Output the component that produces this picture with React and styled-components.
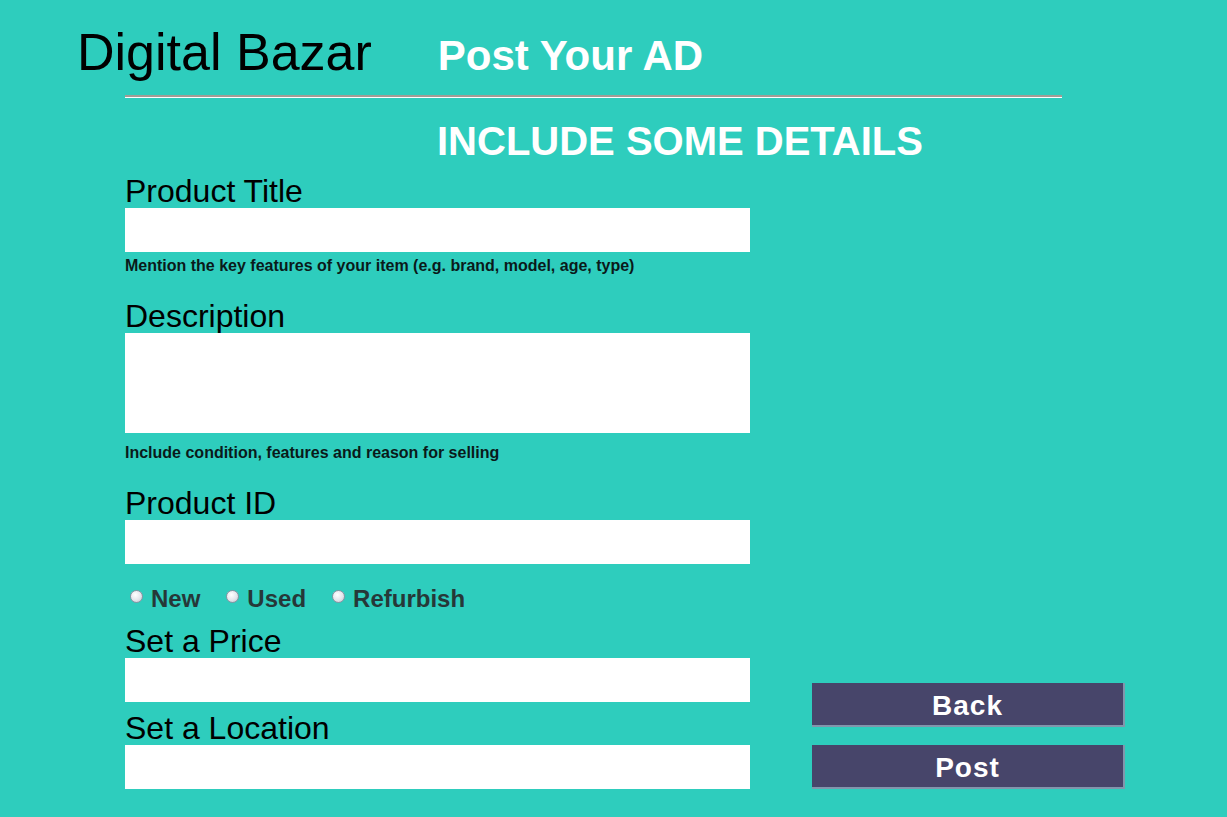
import React from 'react'
import styled, { createGlobalStyle } from 'styled-components';

const GlobalStyle = createGlobalStyle`
    html, body {
        margin: 0;
        background-color: #2ecdbd;
    }
    body {
        font-family: "Liberation Sans", Arial, sans-serif;
    }
`;

const Page = styled.div`
    width: 1227px;
    height: 817px;
    overflow: hidden;
    padding-top: 22px;
    box-sizing: border-box;
`;

const Header = styled.header`
    display: flex;
    align-items: baseline;
    padding-left: 77px;
    height: 60px;
`;

const Brand = styled.h1`
    margin: 0;
    font-size: 52px;
    font-weight: 400;
    line-height: 60px;
    color: #000;
`;

const PageTitle = styled.h2`
    margin: 0 0 0 66px;
    font-size: 42px;
    font-weight: 700;
    color: #fff;
`;

const Divider = styled.hr`
    margin: 13px 0 0 125px;
    width: 937px;
    height: 0;
    border: 0;
    border-top: 2px solid #a39c95;
    border-bottom: 1px solid #fff;
`;

const Heading = styled.h3`
    margin: 18px 0 0 437px;
    font-size: 40px;
    line-height: 50px;
    font-weight: 700;
    color: #fff;
`;

const Main = styled.main`
    display: grid;
    grid-template-columns: 625px 313px;
    column-gap: 62px;
    align-items: end;
    padding-left: 125px;
    margin-top: 8px;
`;

const Form = styled.form`
    display: flex;
    flex-direction: column;
`;

const Label = styled.label`
    display: block;
    margin-top: ${p => p.gap || 0}px;
    font-size: 32px;
    line-height: 34px;
    height: 34px;
    color: #000;
`;

const Input = styled.input`
    display: block;
    width: 625px;
    height: 44px;
    box-sizing: border-box;
    border: 0;
    background: #fff;
    outline: none;
`;

const TextArea = styled.textarea`
    display: block;
    width: 625px;
    height: 100px;
    box-sizing: border-box;
    border: 0;
    background: #fff;
    resize: none;
    outline: none;
`;

const Hint = styled.p`
    margin: ${p => p.gap || 0}px 0 0 0;
    font-size: 16px;
    line-height: 20px;
    height: 20px;
    font-weight: 700;
    color: #0a1a1a;
`;

const RadioRow = styled.div`
    display: flex;
    align-items: center;
    gap: 26px;
    height: 32px;
    margin-top: 19px;
    padding-left: 5px;
`;

const RadioItem = styled.label`
    display: flex;
    align-items: center;
    gap: 8px;
    font-size: 24px;
    font-weight: 700;
    color: #263838;
`;

const Radio = styled.input`
    appearance: none;
    width: 13px;
    height: 13px;
    margin: 0;
    border-radius: 50%;
    border: 1px solid #8d93a3;
    background: radial-gradient(circle at 40% 35%, #ffffff 0%, #e4e6ec 55%, #b9bdc8 100%);
    box-sizing: border-box;
    position: relative;
    top: -3px;
`;

const Actions = styled.div`
    display: flex;
    flex-direction: column;
    gap: 18px;
`;

const Button = styled.button`
    width: 313px;
    height: 44px;
    padding-top: 4px;
    box-sizing: border-box;
    background-color: #47456a;
    border: 0;
    border-right: 2px solid #8196ac;
    border-bottom: 2px solid #8196ac;
    color: #fff;
    font-family: "Liberation Sans", Arial, sans-serif;
    font-size: 28px;
    font-weight: 700;
    letter-spacing: 1px;
    cursor: pointer;
`;

export default function App() {
  return (
    <>
      <GlobalStyle />
      <Page>
        <Header>
          <Brand>Digital Bazar</Brand>
          <PageTitle>Post Your AD</PageTitle>
        </Header>
        <Divider />
        <Heading>INCLUDE SOME DETAILS</Heading>
        <Main>
          <Form onSubmit={e => e.preventDefault()}>
            <Label>Product Title</Label>
            <Input type="text" />
            <Hint gap={4}>Mention the key features of your item (e.g. brand, model, age, type)</Hint>

            <Label gap={23}>Description</Label>
            <TextArea />
            <Hint gap={10}>Include condition, features and reason for selling</Hint>

            <Label gap={23}>Product ID</Label>
            <Input type="text" />

            <RadioRow>
              <RadioItem><Radio type="radio" name="condition" />New</RadioItem>
              <RadioItem><Radio type="radio" name="condition" />Used</RadioItem>
              <RadioItem><Radio type="radio" name="condition" />Refurbish</RadioItem>
            </RadioRow>

            <Label gap={9}>Set a Price</Label>
            <Input type="text" />

            <Label gap={9}>Set a Location</Label>
            <Input type="text" />
          </Form>
          <Actions>
            <Button type="button">Back</Button>
            <Button type="button">Post</Button>
          </Actions>
        </Main>
      </Page>
    </>
  )
}
